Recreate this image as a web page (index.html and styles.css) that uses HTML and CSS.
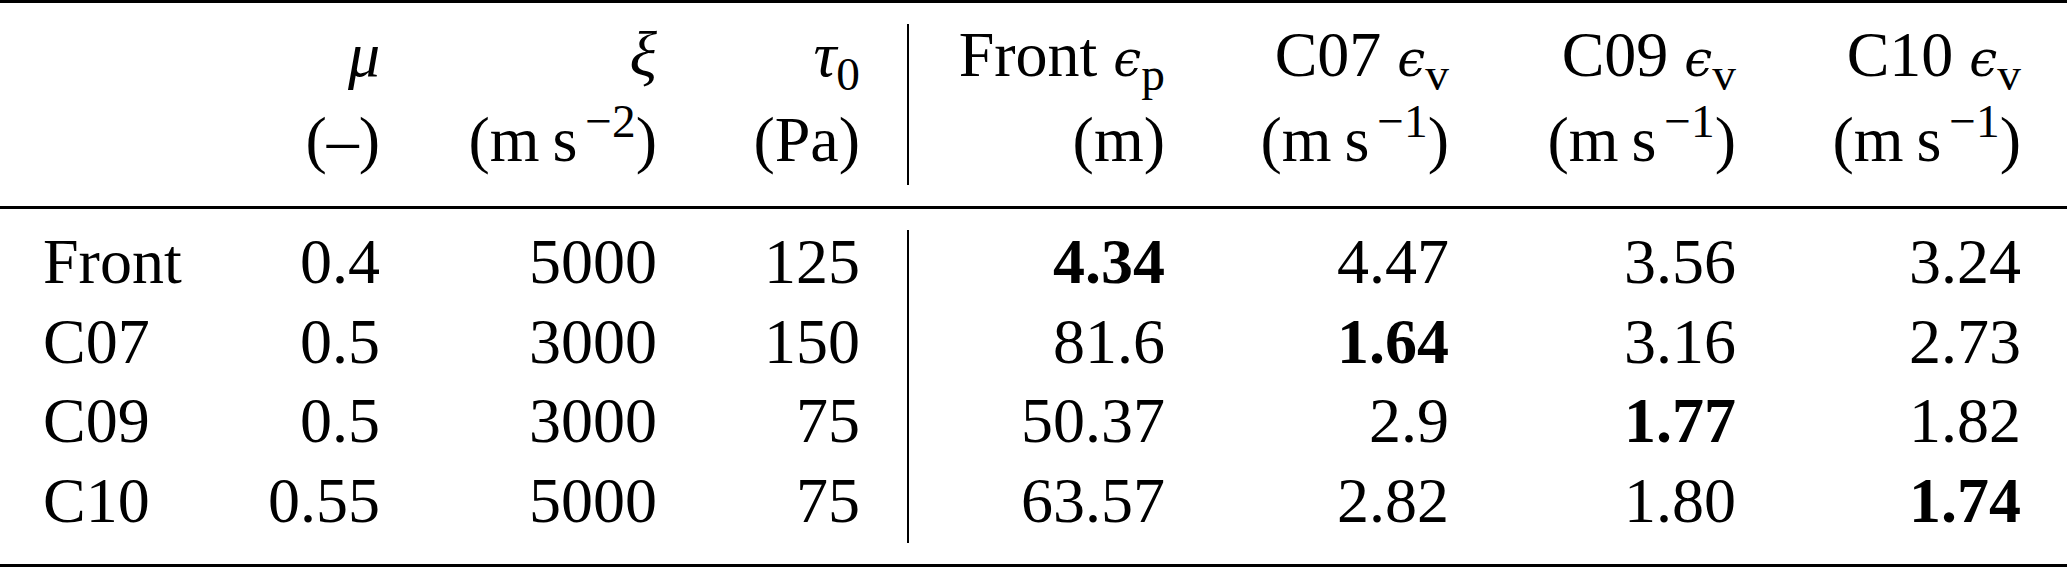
FILE: index.html
```html
<!DOCTYPE html>
<html lang="en">
<head>
    <meta charset="UTF-8">
    <title>Front and chute fit errors</title>
    <link rel="stylesheet" href="styles.css">
</head>
<body>
    <table class="results">
        <colgroup>
            <col class="c-name">
            <col class="c-mu">
            <col class="c-xi">
            <col class="c-tau">
            <col class="c-rule">
            <col class="c-front">
            <col class="c-c07">
            <col class="c-c09">
            <col class="c-c10">
        </colgroup>
        <thead>
            <tr>
                <th class="label"></th>
                <th><span class="name"><i>μ</i></span><span class="unit">(–)</span></th>
                <th><span class="name"><i>ξ</i></span><span class="unit">(m&#8201;s<span class="sup">−2</span>)</span></th>
                <th class="last"><span class="name"><i>τ</i><span class="sub">0</span></span><span class="unit">(Pa)</span></th>
                <th class="vrule"></th>
                <th><span class="name">Front <i class="eps">ϵ</i><span class="sub">p</span></span><span class="unit">(m)</span></th>
                <th><span class="name">C07 <i class="eps">ϵ</i><span class="sub">v</span></span><span class="unit">(m&#8201;s<span class="sup">−1</span>)</span></th>
                <th><span class="name">C09 <i class="eps">ϵ</i><span class="sub">v</span></span><span class="unit">(m&#8201;s<span class="sup">−1</span>)</span></th>
                <th><span class="name">C10 <i class="eps">ϵ</i><span class="sub">v</span></span><span class="unit">(m&#8201;s<span class="sup">−1</span>)</span></th>
            </tr>
        </thead>
        <tbody>
            <tr>
                <td class="label">Front</td>
                <td>0.4</td>
                <td>5000</td>
                <td class="last">125</td>
                <td class="vrule" rowspan="4"></td>
                <td class="best">4.34</td>
                <td>4.47</td>
                <td>3.56</td>
                <td>3.24</td>
            </tr>
            <tr>
                <td class="label">C07</td>
                <td>0.5</td>
                <td>3000</td>
                <td class="last">150</td>
                <td>81.6</td>
                <td class="best">1.64</td>
                <td>3.16</td>
                <td>2.73</td>
            </tr>
            <tr>
                <td class="label">C09</td>
                <td>0.5</td>
                <td>3000</td>
                <td class="last">75</td>
                <td>50.37</td>
                <td>2.9</td>
                <td class="best">1.77</td>
                <td>1.82</td>
            </tr>
            <tr>
                <td class="label">C10</td>
                <td>0.55</td>
                <td>5000</td>
                <td class="last">75</td>
                <td>63.57</td>
                <td>2.82</td>
                <td>1.80</td>
                <td class="best">1.74</td>
            </tr>
        </tbody>
    </table>
</body>
</html>
```

FILE: styles.css
```css
body {
    margin: 0;
    background: #fff;
    color: #000;
    font-family: "Liberation Serif", "Times New Roman", serif;
    font-size: 64px;
}
.results {
    width: 2067px;
    table-layout: fixed;
    border-collapse: separate;
    border-spacing: 0;
    border-top: 3px solid #000;
    border-bottom: 3px solid #000;
}
.c-name { width: 200px; }
.c-mu { width: 226px; }
.c-xi { width: 277px; }
.c-tau { width: 204px; }
.c-rule { width: 2px; }
.c-front { width: 302px; }
.c-c07 { width: 284px; }
.c-c09 { width: 287px; }
.c-c10 { width: 285px; }

th, td {
    padding: 0 46px 0 0;
    text-align: right;
    font-weight: normal;
    white-space: nowrap;
    line-height: 79.5px;
}
th.last, td.last {
    padding-right: 47px;
}
th.label, td.label {
    text-align: left;
    padding: 0 0 0 43px;
}

/* header: two stacked lines, midrule under it */
thead th {
    padding-top: 12px;
    padding-bottom: 21.5px;
    border-bottom: 3px solid #000;
    vertical-align: top;
}
thead th.label {
    padding-top: 12px;
    padding-bottom: 21.5px;
}
.name, .unit {
    display: block;
}
.name { line-height: 79.5px; }
.unit { line-height: 90px; }

tbody tr:first-child td {
    padding-top: 13px;
}
tbody tr:last-child td {
    padding-bottom: 24px;
}

/* vertical rule, kept clear of the horizontal rules */
th.vrule, td.vrule {
    padding: 0;
    background: linear-gradient(#000, #000) center / 2px calc(100% - 42px) no-repeat;
}

.best { font-weight: bold; }

.eps {
    font-family: "DejaVu Serif", serif;
    font-size: 0.78em;
    line-height: 0;
}
.sub, .sup {
    font-size: 0.74em;
    line-height: 0;
}
.sub { vertical-align: -14px; }
.sup {
    vertical-align: 24px;
    margin-left: 8px;
}
```
